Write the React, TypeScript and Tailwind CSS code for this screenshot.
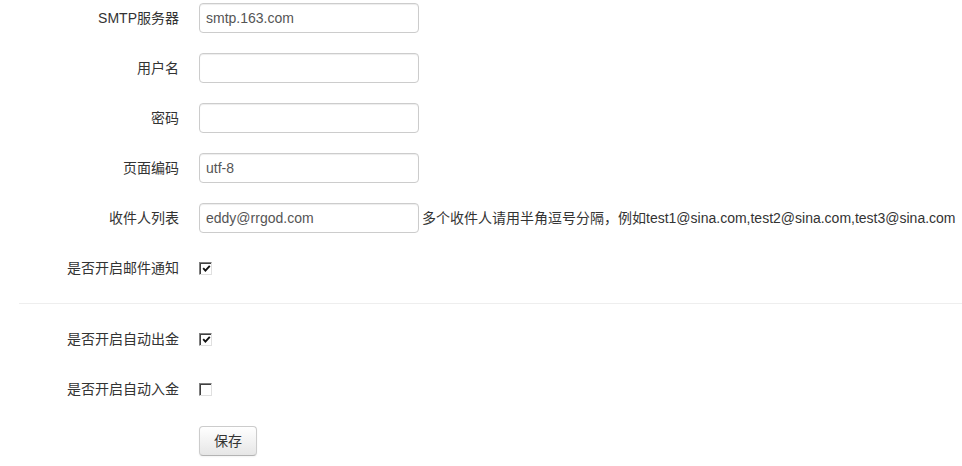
import type { ReactNode } from "react";

const font = "font-['Liberation_Sans','Noto_Sans_CJK_SC',sans-serif]";

type FieldProps = {
  label: string;
  children: ReactNode;
};

// One label + control row, label right-aligned in a fixed column
const Field = ({ label, children }: FieldProps) => (
  <div className="flex h-[30px] items-center">
    <label className="w-[179px] shrink-0 text-right text-[14px] text-[#333]">
      {label}
    </label>
    <div className="ml-[20px] flex items-center">{children}</div>
  </div>
);

const TextInput = ({ value }: { value?: string }) => (
  <input
    type="text"
    defaultValue={value}
    className={`h-[30px] w-[220px] rounded-[4px] border border-[#ccc] bg-white px-[6px] text-[14px] text-[#555] shadow-[inset_0_1px_1px_rgba(0,0,0,0.075)] outline-none ${font}`}
  />
);

// Classic sunken checkbox look
const Check = ({ checked }: { checked?: boolean }) => (
  <span className="flex h-[13px] w-[13px] items-center justify-center border border-t-[#808080] border-l-[#808080] border-r-[#e0e0e0] border-b-[#e0e0e0] bg-white shadow-[inset_1px_1px_0_#404040]">
    {checked && (
      <svg width="9" height="9" viewBox="0 0 9 9" className="ml-px mt-px">
        <path d="M1.2 4.2 L3.4 6.6 L7.8 1.8" fill="none" stroke="#111" strokeWidth="1.9" />
      </svg>
    )}
  </span>
);

export default function App() {
  return (
    <div className={`min-h-[466px] w-[962px] bg-white pt-[3px] ${font}`}>
      <div className="flex flex-col gap-[20px]">
        <Field label="SMTP服务器">
          <TextInput value="smtp.163.com" />
        </Field>
        <Field label="用户名">
          <TextInput />
        </Field>
        <Field label="密码">
          <TextInput />
        </Field>
        <Field label="页面编码">
          <TextInput value="utf-8" />
        </Field>
        <Field label="收件人列表">
          <TextInput value="eddy@rrgod.com" />
          <span className="ml-[3px] whitespace-nowrap text-[14px] text-[#333]">
            多个收件人请用半角逗号分隔，例如test1@sina.com,test2@sina.com,test3@sina.com
          </span>
        </Field>
        <Field label="是否开启邮件通知">
          <Check checked />
        </Field>
      </div>

      <hr className="my-[20px] ml-[19px] border-t border-[#eee]" />

      <div className="flex flex-col gap-[20px]">
        <Field label="是否开启自动出金">
          <Check checked />
        </Field>
        <Field label="是否开启自动入金">
          <Check />
        </Field>
        <div className="flex pl-[199px] pt-[2px]">
          <button
            type="button"
            className="h-[30px] w-[58px] rounded-[4px] border border-[#ccc] border-b-[#b3b3b3] bg-gradient-to-b from-white to-[#e6e6e6] text-[14px] text-[#333] shadow-[0_1px_2px_rgba(0,0,0,0.05)]"
          >
            保存
          </button>
        </div>
      </div>
    </div>
  );
}
